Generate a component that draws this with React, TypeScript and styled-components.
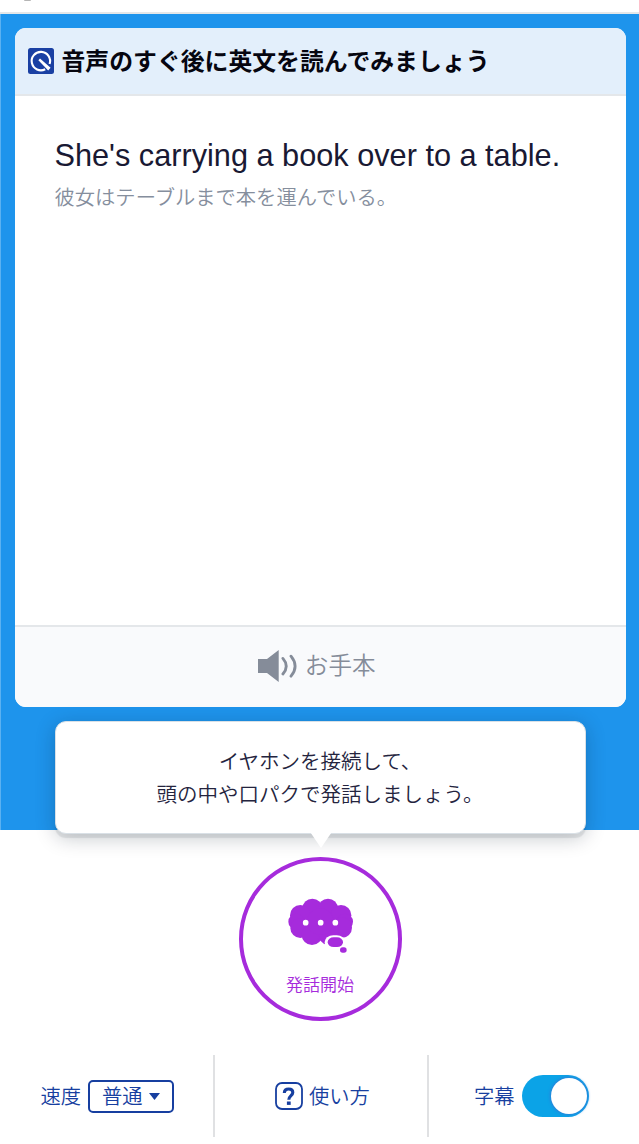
import React from "react";
import styled, { createGlobalStyle } from "styled-components";

const GlobalStyle = createGlobalStyle`
  * { box-sizing: border-box; }
  body {
    margin: 0;
    background: #fff;
    font-family: "Liberation Sans", "Noto Sans CJK JP", sans-serif;
    overflow: hidden;
  }
`;

const jp = `font-family: "Noto Sans CJK JP", sans-serif; font-weight: 350; white-space: nowrap;`;

const Screen = styled.div`
  width: 639px;
  height: 1144px;
  display: flex;
  flex-direction: column;
  background: #fff;
  overflow: hidden;
`;

const TopBar = styled.header`
  flex: none;
  height: 14px;
  padding-left: 24px;
  border-bottom: 2px solid #e4e7e9;
`;

const TopBarMark = styled.div`
  width: 7px;
  height: 1px;
  border-radius: 0 0 4px 4px;
  background: #b5b5b5;
`;

const Stage = styled.main`
  flex: none;
  position: relative;
  height: 816px;
  padding: 14px 13px 0 13.5px;
  background: #1e94ec;
  border-left: 1px solid #5bb1f1;
`;

const Card = styled.section`
  height: 678.5px;
  display: flex;
  flex-direction: column;
  background: #fff;
  border-radius: 11px;
  overflow: hidden;
`;

const CardHeader = styled.div`
  flex: none;
  height: 68px;
  display: flex;
  align-items: center;
  gap: 7.5px;
  padding-left: 13.5px;
  background: #e3effb;
  border-bottom: 2px solid #e4e7ea;
`;

const Title = styled.h1`
  ${jp}
  margin: -2px 0 0;
  font-size: 23.85px;
  font-weight: 700;
  line-height: 36px;
  color: #060610;
`;

const CardBody = styled.div`
  flex: 1;
  padding: 40px 0 0 40px;
`;

const Sentence = styled.p`
  margin: 0;
  font-size: 30.7px;
  line-height: 40px;
  color: #191933;
  white-space: nowrap;
`;

const Translation = styled.p`
  ${jp}
  margin: 5px 0 0;
  font-size: 20.3px;
  line-height: 30px;
  color: #858e9d;
`;

const CardFooter = styled.button`
  flex: none;
  height: 81.5px;
  display: flex;
  align-items: center;
  justify-content: center;
  gap: 8px;
  padding: 0 8px 2px 0;
  border: 0;
  border-top: 2px solid #e4e7ea;
  background: #f9fafc;
  color: #858c99;
`;

const FooterLabel = styled.span`
  ${jp}
  margin-top: -3px;
  font-size: 23.6px;
  line-height: 34px;
`;

const Tooltip = styled.div`
  position: absolute;
  left: 53.5px;
  top: 706.5px;
  z-index: 1;
  width: 531px;
  height: 113.5px;
  padding-top: 22px;
  background: #fff;
  border: 1px solid #d9e0e6;
  border-radius: 11px;
  box-shadow: 0 4px 1px rgba(40, 50, 60, 0.1), 0 4px 20px rgba(0, 20, 40, 0.23);

  &::after {
    content: "";
    position: absolute;
    left: 255px;
    top: 111px;
    width: 21px;
    height: 15.5px;
    background: #fff;
    clip-path: polygon(0 0, 100% 0, 50% 100%);
  }
`;

const TooltipText = styled.p`
  ${jp}
  margin: 0;
  font-size: 20.5px;
  line-height: 33.5px;
  text-align: center;
  color: #24243e;
`;

const SpeakArea = styled.section`
  flex: none;
  height: 225px;
  padding: 27px 0 0 2px;
  display: flex;
  justify-content: center;
  align-items: flex-start;
`;

const SpeakButton = styled.button`
  width: 163.5px;
  height: 164px;
  display: flex;
  flex-direction: column;
  align-items: center;
  padding: 34px 1px 0 0;
  border: 4px solid #a62bdc;
  border-radius: 50%;
  background: #fff;
  color: #a62bdc;
`;

const SpeakLabel = styled.span`
  ${jp}
  margin-top: 16px;
  font-size: 17px;
  line-height: 26px;
`;

const Controls = styled.footer`
  flex: none;
  height: 82px;
  display: grid;
  grid-template-columns: 215px 214px 210px;
`;

const Control = styled.div<{ $divided?: boolean; $gap: number; $start: number }>`
  display: flex;
  align-items: center;
  gap: ${(p) => p.$gap}px;
  padding-left: ${(p) => p.$start}px;
  border-right: ${(p) => (p.$divided ? "2px solid #e0e1e3" : "0")};
  color: #173fa0;
`;

const ControlLabel = styled.span`
  ${jp}
  margin-top: -3px;
  font-size: 20.3px;
  line-height: 30px;
`;

const Select = styled.button`
  width: 86px;
  height: 33px;
  display: flex;
  align-items: center;
  gap: 6.5px;
  padding: 0 0 0 12px;
  border: 2px solid #173fa0;
  border-radius: 5px;
  background: #fff;
  color: #173fa0;
`;

const Switch = styled.div`
  width: 67px;
  height: 42px;
  padding: 3px 2px;
  display: flex;
  justify-content: flex-end;
  align-items: center;
  border-radius: 21px;
  background: #0ba3e7;
`;

const Knob = styled.div`
  width: 36px;
  height: 36px;
  border-radius: 50%;
  background: #fff;
  box-shadow: 0 0 3px 1px #2c7fd8;
`;

const RingIcon = () => (
  <svg width="26" height="26" viewBox="0 0 26 26">
    <rect width="26" height="26" rx="2.5" fill="#1a40a3" />
    <path d="M17.2 21.2A9.2 9.2 0 1 1 21.6 16" fill="none" stroke="#fff" strokeWidth="2.1" />
    <path d="M10.4 12.2L12 10.6L22.6 19.8L20.2 22.4Z" fill="#fff" />
  </svg>
);

const SpeakerIcon = () => (
  <svg width="40" height="34" viewBox="257 649 40 34">
    <path d="M258 659H267L278.7 650V682L267 673H258Z" fill="currentColor" />
    <path
      d="M282.9 658.4Q289.6 666.2 282.9 674M291 656.2Q299.2 666.2 291 676.2"
      fill="none"
      stroke="currentColor"
      strokeWidth="2.8"
      strokeLinecap="round"
    />
  </svg>
);

const ThoughtIcon = () => (
  <svg width="70" height="60" viewBox="180 210 210 180">
    <g fill="currentColor">
      <circle cx="262" cy="251" r="30" />
      <circle cx="309" cy="251" r="30" />
      <circle cx="226" cy="271" r="31" />
      <circle cx="214" cy="290" r="24" />
      <circle cx="226" cy="309" r="30" />
      <circle cx="261" cy="329" r="31" />
      <circle cx="348" cy="271" r="31" />
      <circle cx="360" cy="290" r="24" />
      <circle cx="350" cy="308" r="31" />
      <circle cx="310" cy="319" r="32" />
      <circle cx="286" cy="290" r="40" />
      <path d="M278 340L298 358L312 345Z" />
    </g>
    <rect x="299" y="331" width="62" height="42" rx="26" ry="20" fill="#fff" />
    <rect x="308" y="337" width="46" height="29" rx="18" ry="14" fill="currentColor" />
    <rect x="345" y="367" width="20" height="16" rx="8" fill="currentColor" />
    <circle cx="242" cy="293" r="8.5" fill="#fff" />
    <circle cx="287" cy="293" r="8.5" fill="#fff" />
    <circle cx="331" cy="293" r="8.5" fill="#fff" />
  </svg>
);

const HelpIcon = () => (
  <svg width="28" height="28" viewBox="0 0 28 28" fill="none" stroke="currentColor">
    <rect x="1" y="1" width="26" height="26" rx="6" strokeWidth="1.8" />
    <path d="M9.3 11C9.4 8.2 11.2 7 13.7 7C16.4 7 17.8 8.4 17.8 10.5C17.8 13.6 13.8 13.6 13.8 17.8" strokeWidth="3.1" />
    <path d="M13.8 19.5V22.9" strokeWidth="3.8" />
  </svg>
);

const CaretIcon = () => (
  <svg width="11" height="8" viewBox="0 0 11 8">
    <path d="M0 1H11L5.5 8Z" fill="currentColor" />
  </svg>
);

export default function App() {
  return (
    <Screen>
      <GlobalStyle />
      <TopBar>
        <TopBarMark />
      </TopBar>
      <Stage>
        <Card>
          <CardHeader>
            <RingIcon />
            <Title>音声のすぐ後に英文を読んでみましょう</Title>
          </CardHeader>
          <CardBody>
            <Sentence>She's carrying a book over to a table.</Sentence>
            <Translation>彼女はテーブルまで本を運んでいる。</Translation>
          </CardBody>
          <CardFooter>
            <SpeakerIcon />
            <FooterLabel>お手本</FooterLabel>
          </CardFooter>
        </Card>
        <Tooltip>
          <TooltipText>
            イヤホンを接続して、
            <br />
            頭の中や口パクで発話しましょう。
          </TooltipText>
        </Tooltip>
      </Stage>
      <SpeakArea>
        <SpeakButton>
          <ThoughtIcon />
          <SpeakLabel>発話開始</SpeakLabel>
        </SpeakButton>
      </SpeakArea>
      <Controls>
        <Control $divided $gap={7} $start={40.5}>
          <ControlLabel>速度</ControlLabel>
          <Select>
            <ControlLabel>普通</ControlLabel>
            <CaretIcon />
          </Select>
        </Control>
        <Control $divided $gap={6.5} $start={59.5}>
          <HelpIcon />
          <ControlLabel>使い方</ControlLabel>
        </Control>
        <Control $gap={7} $start={45}>
          <ControlLabel>字幕</ControlLabel>
          <Switch>
            <Knob />
          </Switch>
        </Control>
      </Controls>
    </Screen>
  );
}
